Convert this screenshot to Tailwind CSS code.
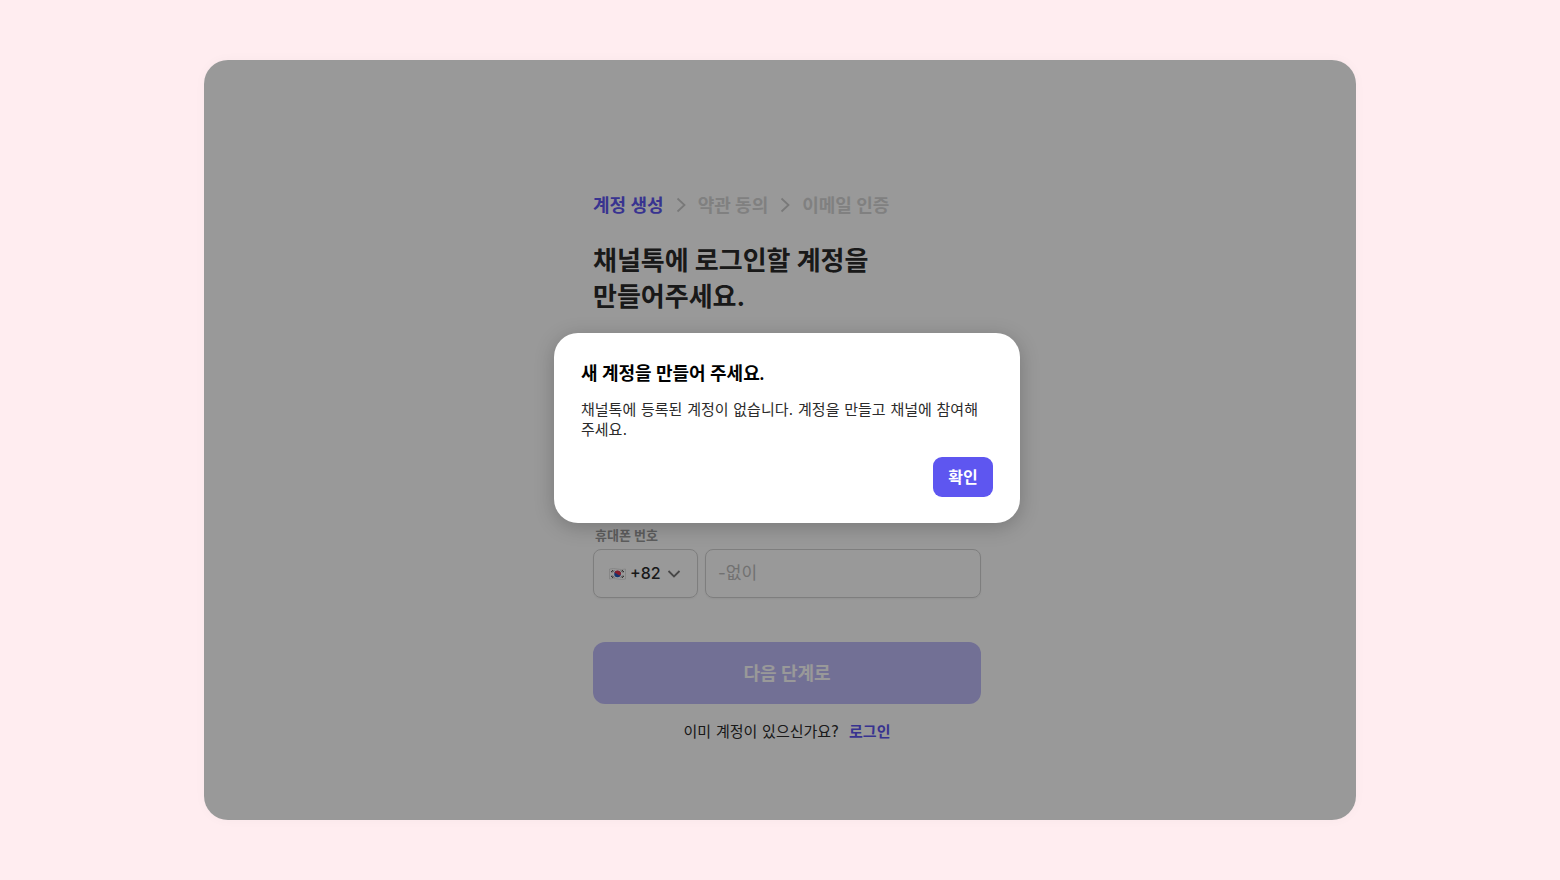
<!DOCTYPE html>
<html lang="ko">
<head>
    <meta charset="UTF-8">
    <meta name="viewport" content="width=device-width, initial-scale=1.0">
    <title>계정 생성</title>
    <script src="https://cdn.jsdelivr.net/npm/@tailwindcss/browser@4"></script>
</head>
<body class="flex flex-col min-h-screen px-4 py-15 bg-[#ffedf0] font-['Inter','Noto_Sans_CJK_KR',sans-serif] text-[#2b2b2b]">
<div class="relative flex flex-col flex-1 w-full max-w-6xl mx-auto overflow-hidden rounded-3xl bg-white shadow-[0_0_12px_rgba(0,0,0,0.03)]">
    <main class="w-full max-w-[402px] mx-auto pl-[14px] pt-32 pb-16">
        <!-- Шаги -->
        <nav class="flex items-center gap-[11px] font-['Lato','Noto_Sans_CJK_KR',sans-serif] text-[18px] leading-[34px] font-bold text-[#d6d6d6]">
            <span class="text-[#5e56f0]">계정 생성</span>
            <svg class="w-3 h-4" viewBox="0 0 12 16" fill="none" stroke="#cacaca" stroke-width="1.800"><path d="M2.500 1.500l7 6.500-7 6.500"/></svg>
            <span>약관 동의</span>
            <svg class="w-3 h-4" viewBox="0 0 12 16" fill="none" stroke="#cacaca" stroke-width="1.800"><path d="M2.500 1.500l7 6.500-7 6.500"/></svg>
            <span>이메일 인증</span>
        </nav>
        <h1 class="mt-[21px] text-[26px] leading-9 font-bold">채널톡에 로그인할 계정을<br>만들어주세요.</h1>
        <form class="mt-[210px]">
            <label for="phone" class="block pl-0.5 text-[13px] leading-5 font-bold text-[#9b9b9b]">휴대폰 번호</label>
            <div class="flex gap-[7px] mt-1">
                <div class="relative flex items-center w-[105px] h-[49px] shrink-0 rounded-lg border border-[#d2d2d2] shadow-xs">
                    <svg class="absolute left-[15px] w-[17px] h-3" viewBox="0 0 34 24">
                        <path d="M1 2q8-2 16 0t16 0v20q-8 2-16 0t-16 0z" fill="#fff" stroke="#c4c4c4"/>
                        <circle cx="17" cy="12" r="6.500" fill="#2458b8"/>
                        <path d="M11 9.500a6.500 6.500 0 0 1 12.500 4q-3 2-6.500-1t-6-3z" fill="#e03048"/>
                        <path d="M4 8l4-4M6 9l4-4M26 4l4 4M24 5l4 4M4 16l4 4M6 15l4 4M26 20l4-4M24 19l4-4" stroke="#333" stroke-width="1.600"/>
                    </svg>
                    <select aria-label="국가 번호" class="w-full h-full pl-9 pb-0.5 appearance-none bg-transparent text-[16px] font-medium">
                        <option>+82</option>
                    </select>
                    <svg class="absolute right-4 w-3.5 h-2.5 pointer-events-none" viewBox="0 0 14 10" fill="none" stroke="#777" stroke-width="1.800"><path d="M1.500 2l5.500 5.500 5.500-5.500"/></svg>
                </div>
                <input id="phone" type="tel" placeholder="-없이" class="flex-1 min-w-0 h-[49px] px-3 pb-0.5 rounded-lg border border-[#d2d2d2] shadow-xs text-[17px] placeholder:text-[#bdbdbd]">
            </div>
            <button type="submit" disabled class="w-full h-[62px] mt-11 rounded-xl bg-[#bfbbf9] font-['Lato','Noto_Sans_CJK_KR',sans-serif] text-[18px] font-bold text-white">다음 단계로</button>
        </form>
        <p class="mt-4 text-center font-['DejaVu_Sans','Noto_Sans_CJK_KR',sans-serif] text-[15px] leading-6">이미 계정이 있으신가요?<a href="#" class="ml-2.5 font-bold text-[#5e56f0]">로그인</a></p>
    </main>

    <!-- Модальное окно -->
    <div class="absolute inset-0 flex items-center justify-center pl-[14px] pb-6 bg-black/40">
        <div role="dialog" aria-modal="true" aria-labelledby="dialog-title" class="w-[466px] max-w-full px-[27px] pt-[27px] pb-[26px] rounded-3xl bg-white shadow-[0_4px_20px_rgba(0,0,0,0.22)]">
            <h2 id="dialog-title" class="font-['Lato','Noto_Sans_CJK_KR',sans-serif] text-[18px] leading-[26px] font-bold text-black">새 계정을 만들어 주세요.</h2>
            <p class="mt-[14px] font-['DejaVu_Sans','Noto_Sans_CJK_KR',sans-serif] text-[15px] leading-5">채널톡에 등록된 계정이 없습니다. 계정을 만들고 채널에 참여해<br>주세요.</p>
            <div class="flex justify-end mt-[17px]">
                <button type="button" class="w-15 h-10 rounded-[9px] bg-[#5e56f0] text-[16px] font-bold text-white">확인</button>
            </div>
        </div>
    </div>
</div>
</body>
</html>
